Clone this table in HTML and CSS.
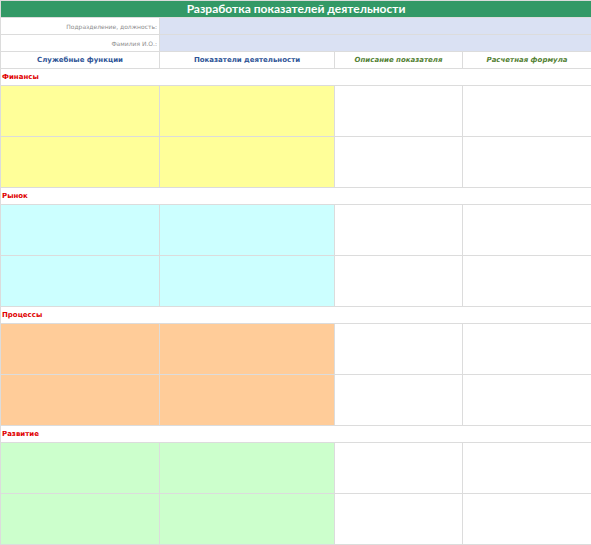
FILE: index.html
```html
<!DOCTYPE html>
<html lang="ru">
<head>
<meta charset="utf-8">
<link rel="stylesheet" href="styles.css">
</head>
<body>
<table class="sheet">
  <colgroup>
    <col class="c1"><col class="c2"><col class="c3"><col class="c4">
  </colgroup>
  <tr class="r-title"><td colspan="4" class="title">Разработка показателей деятельности</td></tr>
  <tr class="r-small"><td class="label">Подразделение, должность:</td><td colspan="3" class="input"></td></tr>
  <tr class="r-small"><td class="label">Фамилия И.О.:</td><td colspan="3" class="input"></td></tr>
  <tr class="r-small">
    <td class="head blue">Служебные функции</td>
    <td class="head blue">Показатели деятельности</td>
    <td class="head green">Описание показателя</td>
    <td class="head green">Расчетная формула</td>
  </tr>
  <tr class="r-small"><td colspan="4" class="section">Финансы</td></tr>
  <tr class="r-data"><td class="yellow"></td><td class="yellow"></td><td></td><td></td></tr>
  <tr class="r-data"><td class="yellow"></td><td class="yellow"></td><td></td><td></td></tr>
  <tr class="r-small"><td colspan="4" class="section">Рынок</td></tr>
  <tr class="r-data"><td class="cyan"></td><td class="cyan"></td><td></td><td></td></tr>
  <tr class="r-data"><td class="cyan"></td><td class="cyan"></td><td></td><td></td></tr>
  <tr class="r-small"><td colspan="4" class="section">Процессы</td></tr>
  <tr class="r-data"><td class="orange"></td><td class="orange"></td><td></td><td></td></tr>
  <tr class="r-data"><td class="orange"></td><td class="orange"></td><td></td><td></td></tr>
  <tr class="r-small"><td colspan="4" class="section">Развитие</td></tr>
  <tr class="r-data"><td class="mint"></td><td class="mint"></td><td></td><td></td></tr>
  <tr class="r-data"><td class="mint"></td><td class="mint"></td><td></td><td></td></tr>
</table>
</body>
</html>
```
FILE: styles.css
```css
html, body {
  margin: 0;
  padding: 0;
  background: #ffffff;
}

.sheet {
  border-collapse: collapse;
  table-layout: fixed;
  width: 591px;
  font-family: "DejaVu Sans", Verdana, sans-serif;
}

.c1 { width: 159px; }
.c2 { width: 175px; }
.c3 { width: 128px; }
.c4 { width: 129px; }

.sheet td {
  border: 1px solid #dcdcdc;
  padding: 0 2px;
  overflow: hidden;
  white-space: nowrap;
}

.r-title { height: 17px; }
.r-small { height: 17px; }
.r-data { height: 51px; }

.title {
  background: #339966;
  color: #ffffff;
  font-family: Lato, "Open Sans", sans-serif;
  font-weight: 700;
  font-size: 12px;
  text-align: center;
  border-color: #339966;
  padding: 0;
  line-height: 16px;
}

.label {
  text-align: right;
  font-size: 6px;
  color: #8c8c8c;
}

.input {
  background: #dae1f3;
}

.head {
  text-align: center;
  font-size: 7px;
  font-weight: 700;
}

.head.blue { color: #2f5597; }
.head.green { color: #548235; font-style: italic; }

.sheet td.section {
  color: #e00000;
  font-weight: 700;
  font-size: 7px;
  text-align: left;
  padding-left: 1px;
}

.yellow { background: #ffff99; }
.cyan { background: #ccffff; }
.orange { background: #ffcc99; }
.mint { background: #ccffcc; }
```
